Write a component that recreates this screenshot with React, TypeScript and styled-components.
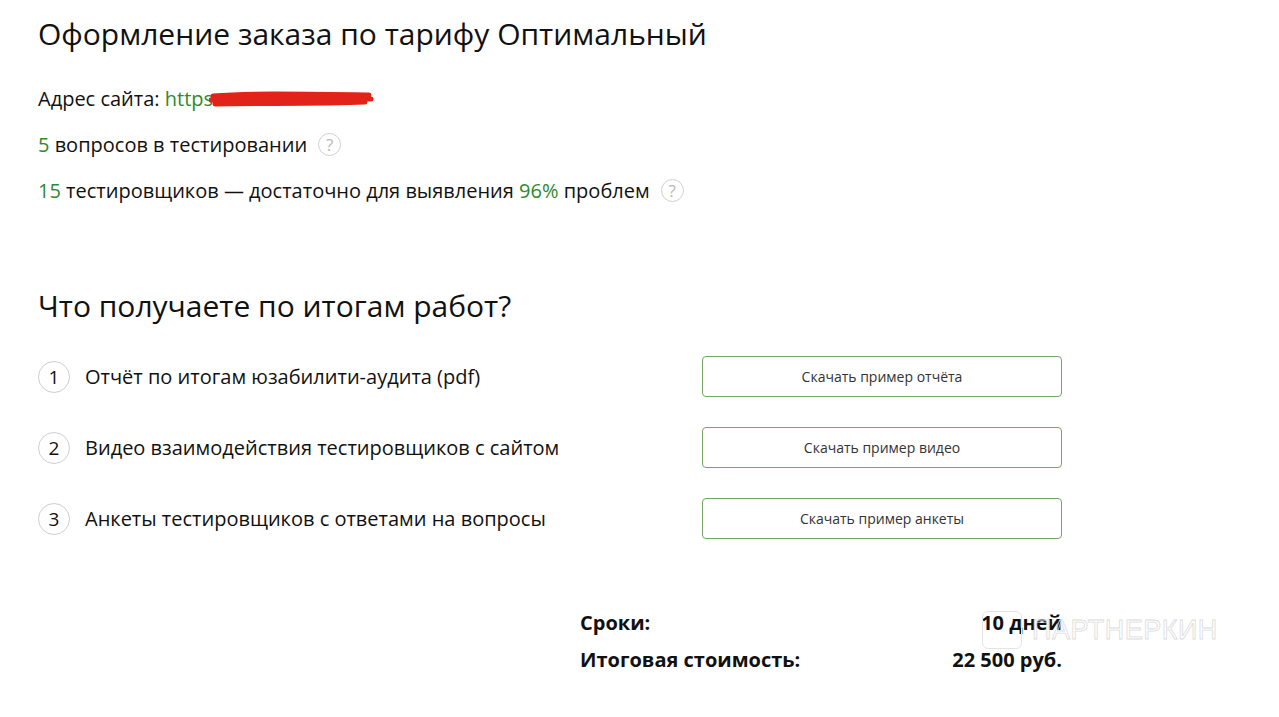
import styled, { createGlobalStyle } from "styled-components";

const GlobalStyle = createGlobalStyle`
  body {
    margin: 0;
    background: #fff;
    font-family: "Open Sans", "Liberation Sans", sans-serif;
    color: #111;
  }
`;

const items = [
  { text: "Отчёт по итогам юзабилити-аудита (pdf)", button: "Скачать пример отчёта" },
  { text: "Видео взаимодействия тестировщиков с сайтом", button: "Скачать пример видео" },
  { text: "Анкеты тестировщиков с ответами на вопросы", button: "Скачать пример анкеты" },
];

const App = () => {
  return (
    <Page>
      <GlobalStyle />
      <Title>Оформление заказа по тарифу Оптимальный</Title>

      <Facts>
        <Fact>
          Адрес сайта: <Green>https</Green>
          <Scribble width="166" height="22" viewBox="0 0 166 22">
            <path
              d="M4 7 C40 4, 90 5, 160 6 M2 11 C50 9, 100 10, 162 10 M6 15 C50 14, 110 15, 156 13"
              stroke="#e2231a"
              strokeWidth="5"
              strokeLinecap="round"
              fill="none"
            />
          </Scribble>
        </Fact>
        <Fact>
          <Green>5</Green> вопросов в тестировании
          <Hint>?</Hint>
        </Fact>
        <Fact>
          <Green>15</Green> тестировщиков — достаточно для выявления <Green>96%</Green> проблем
          <Hint>?</Hint>
        </Fact>
      </Facts>

      <SubTitle>Что получаете по итогам работ?</SubTitle>

      <List>
        {items.map((item, i) => (
          <Row key={item.button}>
            <Label>
              <Num>{i + 1}</Num>
              {item.text}
            </Label>
            <DownloadButton>{item.button}</DownloadButton>
          </Row>
        ))}
      </List>

      <Summary>
        <SumRow>
          <span>Сроки:</span>
          <span>10 дней</span>
        </SumRow>
        <SumRow>
          <span>Итоговая стоимость:</span>
          <span>22 500 руб.</span>
        </SumRow>
        <Watermark>
          <Logo />
          ПАРТНЕРКИН
        </Watermark>
      </Summary>
    </Page>
  );
};

const Page = styled.div`
  width: 1024px;
  padding: 13px 0 40px 38px;
`;

const Title = styled.h1`
  margin: 0;
  font-size: 30px;
  font-weight: 400;
  line-height: 42px;
  color: #111;
`;

const Facts = styled.div`
  display: flex;
  flex-direction: column;
  gap: 21px;
  margin-top: 31px;
`;

const Fact = styled.div`
  display: flex;
  align-items: center;
  font-size: 20px;
  line-height: 25px;
  white-space: pre;
`;

const Green = styled.span`
  color: #2e8a2e;
`;

const Scribble = styled.svg`
  margin-left: -4px;
  margin-top: 2px;
`;

const Hint = styled.span`
  display: inline-flex;
  align-items: center;
  justify-content: center;
  width: 23px;
  height: 23px;
  margin-left: 11px;
  border: 1px solid #d0d0d0;
  border-radius: 50%;
  box-sizing: border-box;
  color: #b8b8b8;
  font-size: 17px;
  line-height: 1;
`;

const SubTitle = styled.h2`
  margin: 84px 0 0;
  font-size: 30px;
  font-weight: 400;
  line-height: 38px;
  color: #111;
`;

const List = styled.div`
  display: flex;
  flex-direction: column;
  gap: 30px;
  margin-top: 31px;
`;

const Row = styled.div`
  display: flex;
  align-items: center;
  justify-content: space-between;
`;

const Label = styled.div`
  display: flex;
  align-items: center;
  gap: 15px;
  font-size: 20px;
  color: #111;
`;

const Num = styled.span`
  display: inline-flex;
  align-items: center;
  justify-content: center;
  width: 32px;
  height: 32px;
  border: 1px solid #cfcfcf;
  border-radius: 50%;
  box-sizing: border-box;
  font-size: 19px;
`;

const DownloadButton = styled.button`
  width: 360px;
  height: 41px;
  border: 1px solid #75a468;
  border-radius: 4px;
  background: #fff;
  font-family: "Open Sans", "Liberation Sans", sans-serif;
  font-size: 14px;
  color: #333;
  cursor: pointer;
`;

const Summary = styled.div`
  position: relative;
  width: 482px;
  margin: 71px 0 0 542px;
  display: flex;
  flex-direction: column;
  gap: 12px;
`;

const SumRow = styled.div`
  display: flex;
  justify-content: space-between;
  font-size: 20px;
  font-weight: 700;
  line-height: 25px;
  color: #111;
`;

const Watermark = styled.div`
  position: absolute;
  left: 402px;
  top: 1px;
  display: flex;
  align-items: center;
  gap: 10px;
  font-family: "Liberation Sans", sans-serif;
  font-size: 27px;
  letter-spacing: 0.5px;
  color: transparent;
  -webkit-text-stroke: 0.8px #dcdcdc;
  pointer-events: none;
`;

const Logo = styled.span`
  width: 40px;
  height: 38px;
  border: 1.5px solid #e4e4e4;
  border-radius: 6px;
  box-sizing: border-box;
`;

export default App;
